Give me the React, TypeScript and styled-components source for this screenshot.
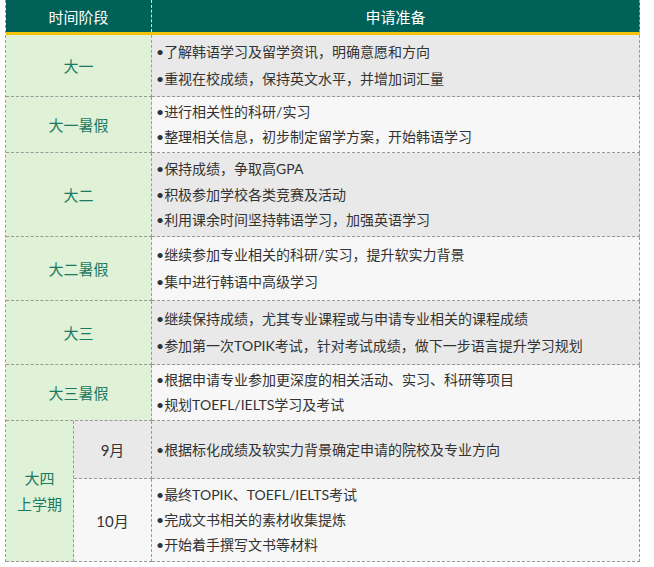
import React from "react";
import styled, { createGlobalStyle } from "styled-components";

const Global = createGlobalStyle`
  body { margin: 0; background: #fff; font-family: Lato, "Noto Sans CJK SC", sans-serif; }
`;

const Table = styled.div`
  margin-left: 5px;
  width: 635px;
  display: grid;
  grid-template-columns: 68px 78px 1fr;
  grid-template-rows: 32px 3px 62px 56px 84px 64px 64px 56px 58px 83px;
  border-left: 1px dashed #999;
  box-sizing: border-box;
`;

const Head = styled.div<{ $span?: boolean; $first?: boolean }>`
  grid-column: ${(p) => (p.$first ? "1 / 3" : "3")};
  background: #006159;
  color: #fff;
  font-size: 15px;
  display: flex;
  align-items: center;
  justify-content: center;
  border-right: 1px dashed ${(p) => (p.$first ? "#e0e0e0" : "#999")};
`;

const Gold = styled.div`
  grid-column: 1 / 4;
  background: #f5c400;
`;

const Stage = styled.div<{ $rows?: number; $cols?: string }>`
  grid-column: ${(p) => p.$cols || "1 / 3"};
  grid-row: span ${(p) => p.$rows || 1};
  background: #dff1d6;
  color: #1c7a62;
  font-size: 15px;
  display: flex;
  align-items: center;
  justify-content: center;
  text-align: center;
  line-height: 26px;
  border-right: 1px dashed #999;
  border-bottom: 1px dashed #999;
`;

const Month = styled.div<{ $alt: boolean }>`
  grid-column: 2;
  background: ${(p) => (p.$alt ? "#f7f7f7" : "#e9e9e9")};
  color: #333;
  font-size: 15px;
  display: flex;
  align-items: center;
  justify-content: center;
  border-right: 1px dashed #999;
  border-bottom: 1px dashed #999;
`;

const Items = styled.div<{ $alt: boolean }>`
  grid-column: 3;
  background: ${(p) => (p.$alt ? "#f7f7f7" : "#e9e9e9")};
  display: flex;
  flex-direction: column;
  justify-content: space-evenly;
  padding: 0 0 0 4px;
  border-right: 1px dashed #999;
  border-bottom: 1px dashed #999;
`;

const Item = styled.div`
  font-size: 14px;
  color: #333;
  white-space: nowrap;
  line-height: 18px;
`;

const rows: { stage: string; items: string[] }[] = [
  { stage: "大一", items: ["了解韩语学习及留学资讯，明确意愿和方向", "重视在校成绩，保持英文水平，并增加词汇量"] },
  { stage: "大一暑假", items: ["进行相关性的科研/实习", "整理相关信息，初步制定留学方案，开始韩语学习"] },
  { stage: "大二", items: ["保持成绩，争取高GPA", "积极参加学校各类竞赛及活动", "利用课余时间坚持韩语学习，加强英语学习"] },
  { stage: "大二暑假", items: ["继续参加专业相关的科研/实习，提升软实力背景", "集中进行韩语中高级学习"] },
  { stage: "大三", items: ["继续保持成绩，尤其专业课程或与申请专业相关的课程成绩", "参加第一次TOPIK考试，针对考试成绩，做下一步语言提升学习规划"] },
  { stage: "大三暑假", items: ["根据申请专业参加更深度的相关活动、实习、科研等项目", "规划TOEFL/IELTS学习及考试"] },
];

const List = ({ items, alt }: { items: string[]; alt: boolean }) => (
  <Items $alt={alt}>
    {items.map((t) => (
      <Item key={t}>•{t}</Item>
    ))}
  </Items>
);

export default function App() {
  return (
    <>
      <Global />
      <Table>
        <Head $first>时间阶段</Head>
        <Head>申请准备</Head>
        <Gold />
        {rows.map((r, i) => (
          <React.Fragment key={r.stage}>
            <Stage>{r.stage}</Stage>
            <List items={r.items} alt={i % 2 === 1} />
          </React.Fragment>
        ))}
        <Stage $rows={2} $cols="1">
          大四
          <br />
          上学期
        </Stage>
        <Month $alt={false}>9月</Month>
        <List items={["根据标化成绩及软实力背景确定申请的院校及专业方向"]} alt={false} />
        <Month $alt>10月</Month>
        <List items={["最终TOPIK、TOEFL/IELTS考试", "完成文书相关的素材收集提炼", "开始着手撰写文书等材料"]} alt />
      </Table>
    </>
  );
}
